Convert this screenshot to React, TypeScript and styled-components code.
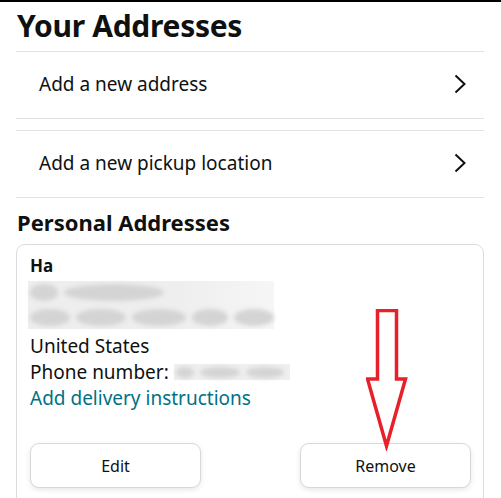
import React from "react";
import styled, { createGlobalStyle } from "styled-components";

const Global = createGlobalStyle`
  html, body { margin: 0; padding: 0; background: #fff; }
  body { font-family: "Noto Sans", "Open Sans", Arial, sans-serif; color: #0f1111; }
  * { box-sizing: border-box; }
`;

const Page = styled.div`
  border-top: 2px solid #000;
  padding: 0 17px 0 16px;
  height: 498px;
  overflow: hidden;
`;

const Title = styled.h1`
  margin: 0;
  height: 49px;
  display: flex;
  align-items: center;
  padding: 0 0 3px 1px;
  font-size: 30px;
  font-weight: 700;
  letter-spacing: -0.3px;
  color: #0f1111;
`;

const Group = styled.div`
  border-top: 1px solid #e3e3e3;
  border-bottom: 1px solid #e3e3e3;
  & + & { margin-top: 11px; }
`;

const Row = styled.div`
  height: 66px;
  display: flex;
  align-items: center;
  justify-content: space-between;
  padding: 0 18px 3px 23px;
  font-size: 19px;
`;

const SectionTitle = styled.h2`
  margin: 0;
  height: 46px;
  display: flex;
  align-items: center;
  padding: 2px 0 0 1px;
  font-size: 22px;
  font-weight: 700;
  color: #0f1111;
`;

const Card = styled.div`
  position: relative;
  border: 1px solid #dcdcdc;
  border-radius: 9px;
  padding: 10px 12px 20px 13px;
  height: 280px;
`;

const Name = styled.div`
  font-size: 17px;
  font-weight: 700;
  line-height: 22px;
`;

const BlurBox = styled.div`
  width: 246px;
  margin: 4px 0 4px -2px;
  padding: 3px 0 3px 2px;
  background: linear-gradient(90deg, #eeeeee 0%, #eeeeee 60%, #f6f6f6 100%);
  display: flex;
  flex-direction: column;
  gap: 8px;
`;

const BlurRow = styled.div`
  display: flex;
  gap: 6px;
  align-items: center;
`;

const Blob = styled.span<{ w: number; h?: number }>`
  display: block;
  width: ${(p) => p.w}px;
  height: ${(p) => p.h ?? 17}px;
  border-radius: 50%;
  background: #d4d4d4;
  filter: blur(2px);
`;

const PhoneBlur = styled.span`
  display: inline-flex;
  align-items: center;
  gap: 6px;
  width: 116px;
  height: 16px;
  margin-left: 5px;
  padding: 0 2px;
  background: #efefef;
`;

const Line = styled.div`
  font-size: 19px;
  line-height: 26px;
  display: flex;
  align-items: center;
`;

const LinkLine = styled(Line)`
  color: #007185;
`;

const Buttons = styled.div`
  display: flex;
  justify-content: space-between;
  margin-top: 32px;
`;

const Button = styled.button`
  width: 171px;
  height: 45px;
  border: 1px solid #d5d9d9;
  border-radius: 9px;
  background: #fff;
  box-shadow: 0 2px 5px rgba(213, 217, 217, 0.6);
  font-family: inherit;
  font-size: 16px;
  color: #0f1111;
`;

const Arrow = styled.svg`
  position: absolute;
  left: 349px;
  top: 64px;
`;

const Chevron = () => (
  <svg width="12" height="20" viewBox="0 0 12 20">
    <path d="M1.5 1.5 L10.5 10 L1.5 18.5" fill="none" stroke="#0f1111" strokeWidth="2" />
  </svg>
);

export default function App() {
  return (
    <>
      <Global />
      <Page>
        <Title>Your Addresses</Title>
        <Group>
          <Row>
            <span>Add a new address</span>
            <Chevron />
          </Row>
        </Group>
        <Group>
          <Row>
            <span>Add a new pickup location</span>
            <Chevron />
          </Row>
        </Group>
        <SectionTitle>Personal Addresses</SectionTitle>
        <Card>
          <Name>Ha</Name>
          <BlurBox>
            <BlurRow>
              <Blob w={28} />
              <Blob w={100} />
            </BlurRow>
            <BlurRow>
              <Blob w={40} />
              <Blob w={50} />
              <Blob w={54} />
              <Blob w={36} />
              <Blob w={40} />
            </BlurRow>
          </BlurBox>
          <Line>United States</Line>
          <Line>
            Phone number:
            <PhoneBlur>
              <Blob w={18} h={11} />
              <Blob w={40} h={11} />
              <Blob w={38} h={11} />
            </PhoneBlur>
          </Line>
          <LinkLine>Add delivery instructions</LinkLine>
          <Buttons>
            <Button>Edit</Button>
            <Button>Remove</Button>
          </Buttons>
          <Arrow width="44" height="142" viewBox="0 0 44 142">
            <path
              d="M11.5 1.5 H30.5 V70 H39.5 L20.5 137 L1.5 70 H11.5 Z"
              fill="none"
              stroke="#e8202a"
              strokeWidth="3.5"
              strokeLinejoin="miter"
            />
          </Arrow>
        </Card>
      </Page>
    </>
  );
}
